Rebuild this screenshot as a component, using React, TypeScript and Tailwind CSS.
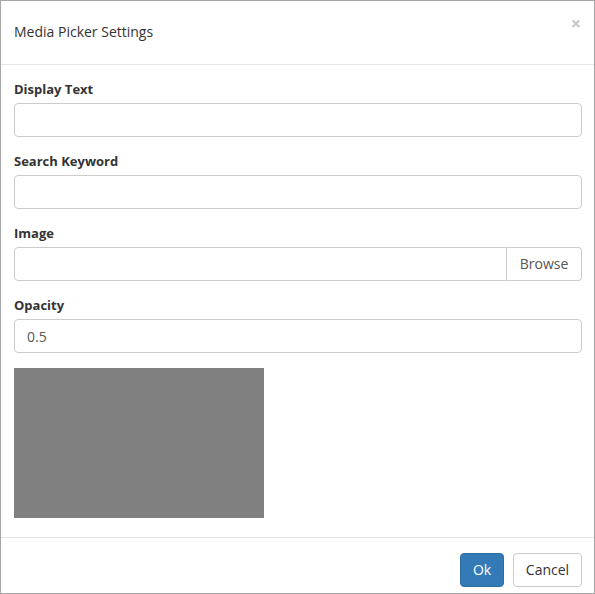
import React from "react";

const Field = ({ label, value }: { label: string; value?: string }) => (
  <div className="mb-[15px]">
    <label className="block mb-[5px] text-[13px] leading-[18px] font-bold text-[#333]">{label}</label>
    <div className="h-[34px] border border-[#ccc] rounded-[4px] px-[12px] flex items-center text-[14px] text-[#555] bg-white">
      {value}
    </div>
  </div>
);

export default function App() {
  return (
    <div
      className="w-[595px] h-[594px] border border-[#a6a6a6] bg-white overflow-hidden flex flex-col"
      style={{ fontFamily: '"Open Sans", sans-serif' }}
    >
      <div className="relative pl-[13px] pr-[15px] pt-[21px] pb-[22px] border-b border-[#e5e5e5]">
        <h4 className="text-[14px] leading-[20px] text-[#333]">Media Picker Settings</h4>
        <span className="absolute right-[13px] top-[12px] text-[18px] font-bold leading-[20px] text-[#c8c8c8]">×</span>
      </div>
      <div className="pl-[13px] pr-[12px] pt-[15px] pb-[19px]">
        <Field label="Display Text" />
        <Field label="Search Keyword" />
        <div className="mb-[15px]">
          <label className="block mb-[5px] text-[13px] leading-[18px] font-bold text-[#333]">Image</label>
          <div className="h-[34px] flex">
            <div className="flex-1 border border-[#ccc] rounded-l-[4px]" />
            <div className="w-[75px] border border-l-0 border-[#ccc] rounded-r-[4px] flex items-center justify-center text-[14px] leading-[20px] pb-[1px] text-[#555]">
              Browse
            </div>
          </div>
        </div>
        <Field label="Opacity" value="0.5" />
        <div className="w-[250px] h-[150px] bg-[#808080]" />
      </div>
      <div className="border-t border-[#e5e5e5] pt-[15px] pr-[12px] flex justify-end gap-[9px]">
        <button className="h-[34px] w-[44px] rounded-[4px] bg-[#337ab7] border border-[#2e6da4] text-white text-[14px] leading-[20px] pb-[1px]">Ok</button>
        <button className="h-[34px] w-[69px] rounded-[4px] bg-white border border-[#ccc] text-[#333] text-[14px] leading-[20px] pb-[1px]">Cancel</button>
      </div>
    </div>
  );
}
